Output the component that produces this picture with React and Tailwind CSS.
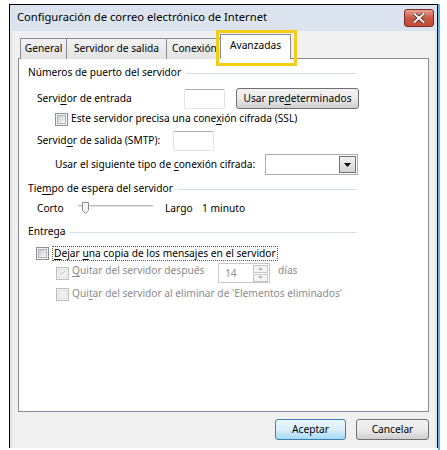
import { Check } from 'lucide-react';

const font = { fontFamily: '"Noto Sans", "Liberation Sans", sans-serif' };

// Casilla estilo Windows 7
function Checkbox({ checked, disabled }) {
  return (
    <div
      className={`w-[13px] h-[13px] shrink-0 border flex items-center justify-center ${
        disabled ? 'border-[#bcbcbc] bg-[#f4f4f4]' : 'border-[#8e8f8f] bg-[#f4f4f4]'
      }`}
    >
      <div
        className={`w-[9px] h-[9px] flex items-center justify-center ${
          disabled ? 'bg-[#f0f0f0] border border-[#e2e2e2]' : 'bg-gradient-to-br from-[#cbcfd5] to-[#f6f6f6] border border-[#aeb3b9]'
        }`}
      >
        {checked && <Check size={10} strokeWidth={2.5} className="text-[#a9a9a9] -mt-[1px]" />}
      </div>
    </div>
  );
}

function GroupHeader({ children }) {
  return (
    <div className="flex items-center h-[14px] w-[329px]">
      <span className="whitespace-nowrap">{children}</span>
      <div className="flex-1 h-px bg-[#d5dfe5] ml-[5px] mt-[1px]" />
    </div>
  );
}

function TextBox({ w, h = 'h-[20px]', children }) {
  return (
    <div
      className={`${w} ${h} bg-white border border-[#e2e3ea] border-t-[#abadb3] rounded-[2px] flex items-center`}
    >
      {children}
    </div>
  );
}

function U({ children }) {
  return <span className="underline underline-offset-[2px]">{children}</span>;
}

const tabBase =
  'h-[21px] border border-[#898c95] border-b-0 bg-gradient-to-b from-[#f2f2f2] to-[#e3e3e3] flex items-center justify-center -mb-px whitespace-nowrap overflow-hidden';

export default function App() {
  return (
    <div className="w-[447px] h-[450px] bg-white relative overflow-hidden text-[10.2px] text-black" style={font}>
      <div className="flex">
        {/* Ventana */}
        <div className="ml-[9px] mt-[4px] w-[429px] h-[444px] border-l border-r border-t border-black bg-[#dbe4ee] flex flex-col">
          {/* Barra de título */}
          <div className="h-[26px] flex items-center justify-between pl-[7px] pr-[3px] shrink-0">
            <span className="text-[11.2px] text-black -mt-[1px]">Configuración de correo electrónico de Internet</span>
            <div className="w-[30px] h-[18px] rounded-[3px] border border-[#7a2a22] bg-gradient-to-b from-[#e8a193] via-[#c75844] to-[#c24a36] flex items-center justify-center">
              <svg width="12" height="10" viewBox="0 0 12 10">
                <path d="M1.5 1 L10.5 9 M10.5 1 L1.5 9" stroke="#5a2018" strokeWidth="3.6" strokeLinecap="square" />
                <path d="M1.5 1 L10.5 9 M10.5 1 L1.5 9" stroke="#ffffff" strokeWidth="2" strokeLinecap="square" />
              </svg>
            </div>
          </div>

          {/* Área cliente */}
          <div className="flex-1 mx-[2px] bg-[#f0f0f0] pl-[6px] pr-[6px] pt-[3px] flex flex-col">
            {/* Pestañas */}
            <div className="relative h-[24px] flex items-end pl-[2px] shrink-0">
              <div className={`${tabBase} w-[47px]`}>General</div>
              <div className={`${tabBase} w-[100px] border-l-0`}>Servidor de salida</div>
              <div className={`${tabBase} w-[54px] border-l-0 justify-start pl-[5px]`}>Conexión</div>
              <div className="h-[25px] w-[71px] border border-[#898c95] border-b-0 bg-white flex items-center justify-center -mb-px -ml-[1px] z-10 pb-[3px]">
                Avanzadas
              </div>
              {/* Resaltado amarillo */}
              <div className="absolute left-[198px] -top-[4px] w-[81px] h-[36px] border-[3px] border-[#f2cf14] z-20" />
            </div>

            {/* Panel */}
            <div className="h-[354px] w-[411px] bg-white border border-[#898c95] pl-[9px] pt-[7px] flex flex-col shrink-0">
              <GroupHeader>Números de puerto del servidor</GroupHeader>

              <div className="flex items-center h-[21px] mt-[8px] pl-[9px]">
                <span className="w-[147px]">
                  Servi<U>d</U>or de entrada
                </span>
                <TextBox w="w-[41px]" />
                <button className="ml-[11px] w-[123px] h-[21px] rounded-[3px] border border-[#707070] bg-gradient-to-b from-[#f2f2f2] via-[#ebebeb] to-[#cfcfcf] flex items-center justify-center">
                  <span>
                    Usar pre<U>d</U>eterminados
                  </span>
                </button>
              </div>

              <div className="flex items-center h-[14px] mt-[3px] pl-[27px] gap-[3px]">
                <Checkbox />
                <span>
                  Este servidor precisa una cone<U>x</U>ión cifrada (SSL)
                </span>
              </div>

              <div className="flex items-center h-[20px] mt-[5px] pl-[9px]">
                <span className="w-[136px]">
                  Servid<U>o</U>r de salida (SMTP):
                </span>
                <TextBox w="w-[41px]" />
              </div>

              <div className="flex items-center h-[21px] mt-[3px] pl-[27px]">
                <span className="w-[210px]">
                  Usar el siguiente tipo de <U>c</U>onexión cifrada:
                </span>
                <div className="w-[93px] h-[21px] bg-white border border-[#abadb3] flex items-center justify-end pr-[1px]">
                  <div className="w-[17px] h-[17px] border border-[#707070] bg-gradient-to-b from-[#f2f2f2] to-[#d4d4d4] flex items-center justify-center">
                    <svg width="7" height="4" viewBox="0 0 7 4">
                      <path d="M0 0 H7 L3.5 4 Z" fill="#000" />
                    </svg>
                  </div>
                </div>
              </div>

              <div className="mt-[7px]">
                <GroupHeader>
                  Tie<U>m</U>po de espera del servidor
                </GroupHeader>
              </div>

              <div className="flex items-center h-[14px] mt-[6px] pl-[9px]">
                <span className="w-[41px]">Corto</span>
                <svg width="76" height="14" viewBox="0 0 76 14" className="shrink-0">
                  <rect x="0" y="3" width="75" height="2" fill="#e5e5e5" />
                  <rect x="0" y="3" width="75" height="1" fill="#b9b9b9" />
                  <path d="M4.5 0.5 H10.5 V8.5 L7.5 11.5 L4.5 8.5 Z" fill="#f4f4f4" stroke="#8e8f8f" />
                </svg>
                <span className="ml-[11px] w-[37px]">Largo</span>
                <span>1 minuto</span>
              </div>

              <div className="mt-[9px]">
                <GroupHeader>Entrega</GroupHeader>
              </div>

              <div className="flex items-center h-[15px] mt-[7px] pl-[8px] gap-[3px]">
                <Checkbox />
                <div className="border border-dotted border-[#555] px-[1px] h-[15px] flex items-center">
                  <span>
                    <U>D</U>ejar <U>u</U>na copia de los mensajes en el servidor
                  </span>
                </div>
              </div>

              <div className="flex items-center h-[20px] mt-[2px] pl-[28px] gap-[3px]">
                <Checkbox checked disabled />
                <span className="w-[143px] text-[#8b8b8b] -mt-[4px]">
                  <U>Q</U>uitar del servidor después
                </span>
                <div className="w-[52px] h-[20px] bg-white border border-[#c8c8c8] flex items-center pl-[6px] justify-between pr-[1px] text-[#8b8b8b]">
                  <span className="mt-[1px]">14</span>
                  <div className="flex flex-col gap-px">
                    <div className="w-[15px] h-[8px] border border-[#c6c6c6] bg-[#f4f4f4] flex items-center justify-center">
                      <svg width="5" height="3" viewBox="0 0 5 3"><path d="M0 3 L2.5 0 L5 3 Z" fill="#b5b5b5" /></svg>
                    </div>
                    <div className="w-[15px] h-[8px] border border-[#c6c6c6] bg-[#f4f4f4] flex items-center justify-center">
                      <svg width="5" height="3" viewBox="0 0 5 3"><path d="M0 0 L2.5 3 L5 0 Z" fill="#b5b5b5" /></svg>
                    </div>
                  </div>
                </div>
                <span className="ml-[5px] text-[#8b8b8b] -mt-[4px]">días</span>
              </div>

              <div className="flex items-center h-[14px] mt-[4px] pl-[28px] gap-[3px]">
                <Checkbox disabled />
                <span className="text-[#8b8b8b]">
                  Qui<U>t</U>ar del servidor al eliminar de 'Elementos eliminados'
                </span>
              </div>
            </div>

            {/* Botones */}
            <div className="flex justify-end gap-[10px] mt-[7px] w-[411px] shrink-0">
              <button className="w-[71px] h-[21px] rounded-[3px] border border-[#3c7fb1] bg-gradient-to-b from-[#eaf6fd] via-[#d9f0fc] to-[#a7d9f5] flex items-center justify-center">
                Aceptar
              </button>
              <button className="w-[73px] h-[21px] rounded-[3px] border border-[#707070] bg-gradient-to-b from-[#f2f2f2] via-[#ebebeb] to-[#cfcfcf] flex items-center justify-center">
                Cancelar
              </button>
            </div>
          </div>
          <div className="h-[2px] mx-[2px] bg-[#f0f0f0] shrink-0" />
        </div>
        {/* Borde derecho de la ventana de atrás */}
        <div className="mt-[4px] w-[2px] h-[446px] bg-[#5fb6e4]" />
      </div>
      <div className="h-[2px] bg-[#39b6e3] ml-[9px]" />
    </div>
  );
}
